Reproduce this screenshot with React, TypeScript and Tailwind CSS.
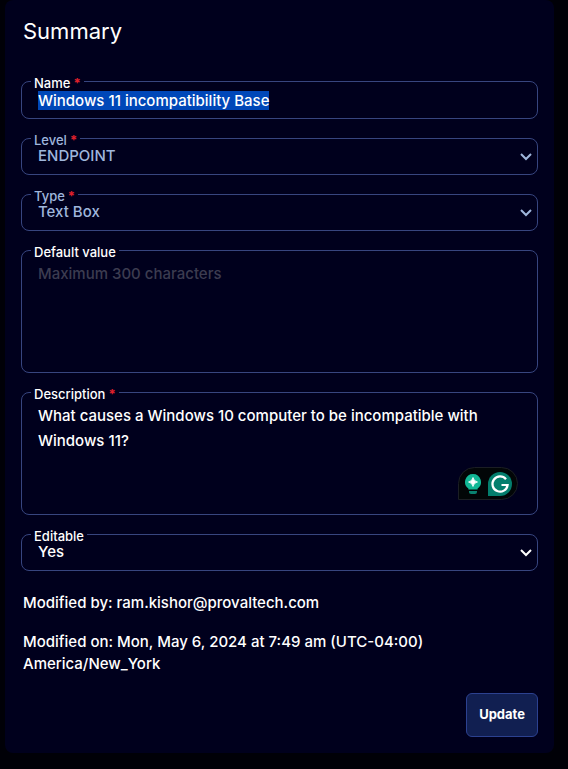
import { useEffect, useRef, type ReactNode } from "react";

const control =
  "block w-full appearance-none rounded-lg border border-[#37457f] bg-transparent px-4 text-[15px] font-medium outline-none";

type FieldProps = {
  id: string;
  label: string;
  required?: boolean;
  muted?: boolean;
  children: ReactNode;
};

function Field({ id, label, required, muted, children }: FieldProps) {
  return (
    <div className={muted ? "relative text-[#9fb6dc]" : "relative text-white"}>
      {children}
      <label
        htmlFor={id}
        className="absolute -top-1.5 left-2.5 flex gap-[3px] bg-[#00001d] px-[3px] text-[13px] leading-4 font-medium"
      >
        {label}
        {required && <span className="font-bold text-[#e0202c]">*</span>}
      </label>
    </div>
  );
}

function Chevron() {
  return (
    <svg
      className="pointer-events-none absolute top-3.5 right-1.5"
      width="12"
      height="10"
      viewBox="0 0 12 10"
      fill="none"
      stroke="currentColor"
      strokeWidth="2"
      aria-hidden="true"
    >
      <path d="M1 2 L6 7 L11 2" />
    </svg>
  );
}

type SelectProps = {
  id: string;
  label: string;
  value: string;
  required?: boolean;
  muted?: boolean;
};

function SelectField({ id, label, value, required, muted }: SelectProps) {
  return (
    <Field id={id} label={label} required={required} muted={muted}>
      <select id={id} defaultValue={value} className={`${control} h-[37px]`}>
        <option>{value}</option>
      </select>
      <Chevron />
    </Field>
  );
}

function WritingAssistant() {
  return (
    <div className="absolute right-5 bottom-[15px] flex h-[33px] w-[60px] items-center gap-1.5 rounded-t-full rounded-br-full border border-[#1b1e24] bg-[#020607] pl-[5px]">
      <svg width="18" height="22" viewBox="0 0 18 22" aria-hidden="true">
        <path
          d="M9 1a8 8 0 0 0-4.600 14.500V16.500h9.200v-1A8 8 0 0 0 9 1Z"
          fill="#11b795"
        />
        <path d="M5 18h8v1q0 2-2 2H7q-2 0-2-2Z" fill="#0a8270" />
        <path
          d="M9 4.500q.8 3.700 4.500 4.500q-3.700.8-4.500 4.500q-.8-3.700-4.500-4.500q3.700-.8 4.500-4.500Z"
          fill="white"
          stroke="white"
          strokeWidth="0.8"
        />
      </svg>
      <svg width="24" height="24" viewBox="0 0 24 24" aria-hidden="true">
        <path d="M0 24V12A12 12 0 1 1 12 24Z" fill="#047e6d" />
        <path
          d="M18 7.300A7.600 7.600 0 1 0 19.600 13H13.500"
          fill="none"
          stroke="white"
          strokeWidth="2.200"
        />
      </svg>
    </div>
  );
}

export default function App() {
  const nameRef = useRef<HTMLInputElement>(null);

  useEffect(() => {
    nameRef.current?.focus();
    nameRef.current?.select();
  }, []);

  return (
    <main className="min-h-screen bg-[#000007] pr-3.5 pb-4 pl-[5px] font-['Inter',sans-serif] text-white">
      <form
        className="rounded-lg bg-[#00001d] p-4"
        onSubmit={(e) => e.preventDefault()}
      >
        <h1 className="px-0.5 text-[22px] leading-[30px]">Summary</h1>

        <div className="mt-[35px] flex flex-col gap-[19px]">
          <Field id="name" label="Name" required>
            <input
              ref={nameRef}
              id="name"
              type="text"
              defaultValue="Windows 11 incompatibility Base"
              className={`${control} h-[38px] selection:bg-[#0047b8] selection:text-white`}
            />
          </Field>
          <SelectField id="level" label="Level" value="ENDPOINT" required muted />
          <SelectField id="type" label="Type" value="Text Box" required muted />
          <Field id="default" label="Default value">
            <textarea
              id="default"
              placeholder="Maximum 300 characters"
              className={`${control} h-[123px] resize-none py-2.5 leading-[25px] placeholder:text-[#3c3c50]`}
            />
          </Field>
          <Field id="description" label="Description" required>
            <textarea
              id="description"
              defaultValue="What causes a Windows 10 computer to be incompatible with Windows 11?"
              className={`${control} h-[123px] resize-none py-2.5 leading-[25px]`}
            />
            <WritingAssistant />
          </Field>
          <SelectField id="editable" label="Editable" value="Yes" />
        </div>

        <div className="mt-[21px] flex flex-col gap-[17px] px-0.5 text-[15px] leading-[22px] font-medium">
          <p>Modified by: ram.kishor@provaltech.com</p>
          <p>
            Modified on: Mon, May 6, 2024 at 7:49 am (UTC-04:00)
            America/New_York
          </p>
        </div>

        <div className="mt-[18px] flex justify-end">
          <button
            type="submit"
            className="h-11 rounded-md border border-[#2c4190] bg-[#111f51] px-3 text-[13px] font-bold"
          >
            Update
          </button>
        </div>
      </form>
    </main>
  );
}
